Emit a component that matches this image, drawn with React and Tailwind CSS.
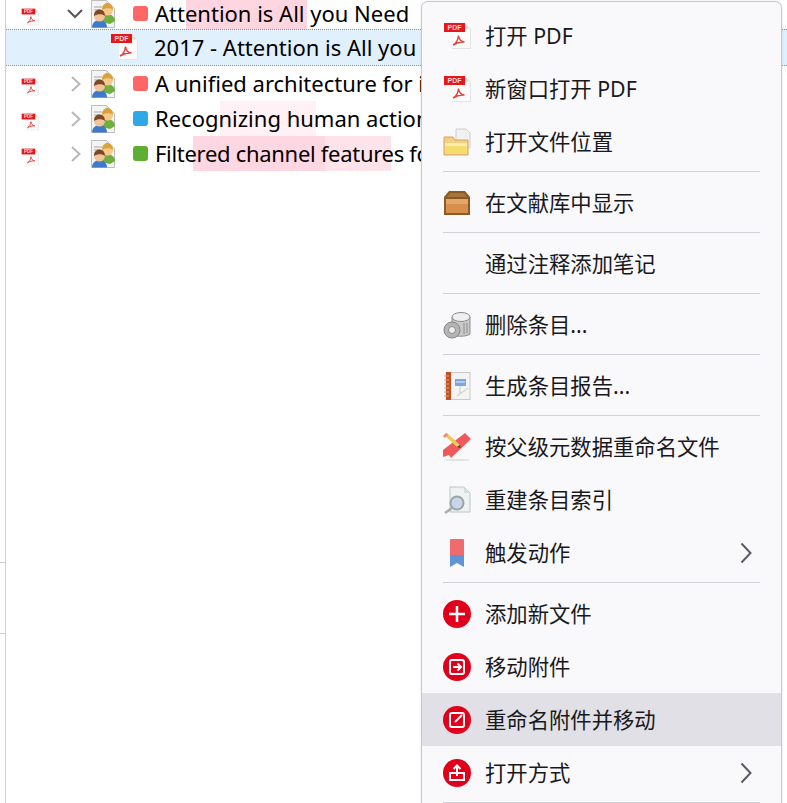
const latin = "font-['Noto_Sans','Noto_Sans_CJK_SC',sans-serif]";

function PdfIcon({ className }) {
  return (
    <svg viewBox="0 0 28 28" className={className}>
      <path d="M9 1h13l6 6v20H9z" fill="#e3e3e3" />
      <path d="M9 1h12.500L27 6.500V26H9z" fill="#fbfbfb" />
      <path d="M21.500 1v5.500H27z" fill="#dcdcdc" />
      <rect x="1" y="1" width="21" height="9" fill="#e5161c" />
      <text
        x="11.500"
        y="8.200"
        textAnchor="middle"
        fontSize="7"
        fontWeight="700"
        fontFamily="Liberation Sans, sans-serif"
        fill="#fbd5d5"
      >
        PDF
      </text>
      <path
        d="M10 23c3-1.500 5-5 5.500-9.500.3 3.500 2 6 6 6.500-3.500-.3-8 .7-11.500 3z"
        fill="none"
        stroke="#e8443f"
        strokeWidth="1.500"
      />
    </svg>
  );
}

function PeopleIcon() {
  return (
    <svg viewBox="0 0 24 28" className="w-6 h-7 shrink-0">
      <path d="M.5.500h15l8 8v19H.5z" fill="#f4f4f4" stroke="#bdbdbd" />
      <path d="M15 .500v8h8.500z" fill="#dedede" />
      <path d="M3 7h8M3 10h6M3 13h5" stroke="#a5a5a5" />
      <path d="M10 22c0-5 4-8 7-8s7 3 7 7l-5 3z" fill="#6fae3f" />
      <circle cx="16.500" cy="10" r="5.500" fill="#f4c98a" />
      <path d="M11 10c0-5 3-7 5.500-7s5.500 2 5.500 7c-2-2.500-8-2.500-11 0z" fill="#dca23a" />
      <path d="M1 27.500c0-5 4-7.500 7.500-7.500s7.500 2.500 7.500 7.500z" fill="#3f79c9" />
      <circle cx="8.500" cy="16" r="5.500" fill="#f0c39a" />
      <path d="M3 16c0-5 3-6.500 5.500-6.500S14 11 14 16c-2.500-2.500-7.500-2.500-11 0z" fill="#7b4a25" />
    </svg>
  );
}

function FolderIcon() {
  return (
    <svg viewBox="0 0 28 28" className="w-7 h-7">
      <path d="M13 1h10l4 4v15H13z" fill="#f1f1f1" stroke="#cfcfcf" />
      <path d="M1 9h9l2 3h13v15H1z" fill="#f3cf86" stroke="#d9a45a" />
      <path d="M2 15h22v11H2z" fill="#f4dc6e" />
      <path d="M2 15h22v3H2z" fill="#fbeeb0" />
    </svg>
  );
}

function BoxIcon() {
  return (
    <svg viewBox="0 0 28 28" className="w-7 h-7">
      <path d="M6 2h16l5 6v18H1V8z" fill="#8a5a24" />
      <path d="M7 4h14l3 4H4z" fill="#a8743a" />
      <rect x="3" y="10" width="22" height="14" fill="#d98f4c" />
      <path d="M3 10h22v5H3z" fill="#e4a76a" />
    </svg>
  );
}

function TrashIcon() {
  return (
    <svg viewBox="0 0 28 28" className="w-7 h-7">
      <path d="M9 6v17c3 3 14 3 18 0V6z" fill="#c9c9c9" stroke="#8c8c8c" />
      <ellipse cx="18" cy="6" rx="9" ry="4.500" fill="#efefef" stroke="#8c8c8c" />
      <path d="M21 12v11M24 12v10" stroke="#8c8c8c" />
      <circle cx="9" cy="19" r="8" fill="#b5b5b5" stroke="#848484" />
      <circle cx="9" cy="19" r="3.500" fill="#eeeeee" stroke="#8c8c8c" />
    </svg>
  );
}

function ReportIcon() {
  return (
    <svg viewBox="0 0 28 28" className="w-7 h-7">
      <rect x="3" y="0.500" width="24" height="27" fill="#f4f4f4" stroke="#c9c9c9" />
      <rect x="3" y="0" width="5" height="28" fill="#c4501f" />
      <path d="M1 4h5M1 8h5M1 12h5M1 16h5M1 20h5M1 24h5" stroke="#d7a48c" />
      <rect x="12" y="7" width="11" height="7" fill="#7da5e3" />
      <path d="M13 10h9" stroke="#e6eefb" />
      <path d="M17 14v8M14 24l11-8" stroke="#d6d6d6" strokeWidth="1.500" fill="none" />
    </svg>
  );
}

function RenameIcon() {
  return (
    <svg viewBox="0 0 28 28" className="w-7 h-7">
      <ellipse cx="14" cy="27" rx="13" ry="1" fill="#e2e2e2" />
      <path d="M22 0l6 6-20 19-2-3-6 2v-7z" fill="#f0595c" />
      <path d="M1 2l3-2 13 12-3 2z" fill="#eccb5f" />
      <path d="M14 14l3-2 .5 3z" fill="#4a3a2a" />
      <path d="M0 3l3-3 2 2-3 3z" fill="#e98a8a" />
    </svg>
  );
}

function IndexIcon() {
  return (
    <svg viewBox="0 0 28 28" className="w-7 h-7">
      <path d="M7 1h14l6 6v19H7z" fill="#eef2f0" stroke="#b9c7c2" />
      <path d="M21 1v6h6z" fill="#d5dedb" />
      <circle cx="14" cy="17" r="6.500" fill="#c7d6ec" stroke="#98a6a3" strokeWidth="2" />
      <path d="M9 22l-7 5" stroke="#a5b0ad" strokeWidth="2.500" />
    </svg>
  );
}

function BookmarkIcon() {
  return (
    <svg viewBox="0 0 14 28" className="w-3.5 h-7">
      <path d="M1 0h12a1 1 0 0 1 1 1v15H0V1a1 1 0 0 1 1-1z" fill="#f06b6e" />
      <path d="M0 16h14v12l-7-4-7 4z" fill="#5f93d3" />
    </svg>
  );
}

function RedCircle({ children }) {
  return (
    <svg viewBox="0 0 28 28" className="w-7 h-7">
      <circle cx="14" cy="14" r="14" fill="#e0001b" />
      <g fill="none" stroke="#fff" strokeWidth="2">
        {children}
      </g>
    </svg>
  );
}

// tree twisties and the submenu arrow are thinner and longer than the icon package's chevrons
function TreeArrowRight() {
  return (
    <svg viewBox="0 0 10 16" className="w-2.5 h-4 shrink-0">
      <path d="M1 1l7.500 7L1 15" fill="none" stroke="#b8b8b8" strokeWidth="2" />
    </svg>
  );
}

function TreeArrowDown() {
  return (
    <svg viewBox="0 0 16 10" className="w-4 h-2.5 shrink-0">
      <path d="M1 1l7 7 7-7" fill="none" stroke="#555" strokeWidth="2" />
    </svg>
  );
}

function MenuArrow() {
  return (
    <svg viewBox="0 0 12 22" className="w-3 h-[22px] shrink-0">
      <path d="M1.500 1.500l9 9.500-9 9.500" fill="none" stroke="#5b5b66" strokeWidth="2" />
    </svg>
  );
}

const rows = [
  {
    title: "A unified architecture for image and text understanding with multitask learning",
    color: "bg-[#ff6666]",
    marks: [],
  },
  {
    title: "Recognizing human action in time-sequential images",
    color: "bg-[#2ea8e6]",
    marks: [{ cls: "left-[65px] w-[96px] bg-[#fff1f5]" }],
  },
  {
    title: "Filtered channel features for pedestrian detection",
    color: "bg-[#5fae34]",
    tracking: "tracking-[-0.3px]",
    marks: [
      { cls: "left-[38px] w-[132px] bg-[#ffd7e2]" },
      { cls: "left-[170px] w-[66px] bg-[#ffe3ea]" },
    ],
  },
];

const menuGroups = [
  [
    { label: "打开 PDF", icon: <PdfIcon className="w-7 h-7" /> },
    { label: "新窗口打开 PDF", icon: <PdfIcon className="w-7 h-7" /> },
    { label: "打开文件位置", icon: <FolderIcon /> },
  ],
  [{ label: "在文献库中显示", icon: <BoxIcon /> }],
  [{ label: "通过注释添加笔记" }],
  [{ label: "删除条目...", icon: <TrashIcon /> }],
  [{ label: "生成条目报告...", icon: <ReportIcon /> }],
  [
    { label: "按父级元数据重命名文件", icon: <RenameIcon /> },
    { label: "重建条目索引", icon: <IndexIcon /> },
    { label: "触发动作", icon: <BookmarkIcon />, arrow: true },
  ],
  [
    {
      label: "添加新文件",
      icon: (
        <RedCircle>
          <path d="M14 6v16M6 14h16" strokeWidth="2.500" />
        </RedCircle>
      ),
    },
    {
      label: "移动附件",
      icon: (
        <RedCircle>
          <rect x="7" y="7" width="14" height="14" rx="2" />
          <path d="M10 14h8M14.500 10.500l3.500 3.500-3.500 3.500" />
        </RedCircle>
      ),
    },
    {
      label: "重命名附件并移动",
      active: true,
      icon: (
        <RedCircle>
          <rect x="7" y="7" width="14" height="14" rx="2" />
          <path d="M12 16l7-7" />
        </RedCircle>
      ),
    },
    {
      label: "打开方式",
      arrow: true,
      icon: (
        <RedCircle>
          <path d="M7 13v8h14v-8M14 17V7M10.500 10l3.500-3.500 3.500 3.500M7 14h14" />
        </RedCircle>
      ),
    },
  ],
];

function MenuItem({ item }) {
  return (
    <div
      className={`flex items-center h-[53px] pl-[21px] pr-[29px] ${
        item.active ? "bg-[#e0e0e6]" : ""
      }`}
    >
      <div className="w-7 h-7 flex justify-center items-center shrink-0">{item.icon}</div>
      <span className="ml-[14px] pt-px text-[21.33px] leading-none text-[#18181b] flex-1">
        {item.label}
      </span>
      {item.arrow && <MenuArrow />}
    </div>
  );
}

function App() {
  return (
    <div className={`relative flex w-[787px] h-[803px] overflow-hidden bg-white ${latin}`}>
      <aside className="w-1.5 h-full shrink-0 border-r border-[#cfcfcf]">
        <div className="mt-[562px] h-px bg-[#cfcfcf]" />
        <div className="mt-[70px] h-px bg-[#cfcfcf]" />
      </aside>

      <div className="flex-1 min-w-0 text-[22px] text-black whitespace-nowrap">
        <div className="flex items-center h-[29px]">
          <PdfIcon className="ml-[15px] mt-[5px] w-[18px] h-[18px] shrink-0" />
          <div className="ml-[28px] -mt-[2px]">
            <TreeArrowDown />
          </div>
          <div className="ml-2 -mt-px">
            <PeopleIcon />
          </div>
          <span className="ml-[18px] -mt-[3px] w-[15px] h-[15px] rounded-[3px] bg-[#ff6666] shrink-0" />
          <div className="relative ml-[7px] h-full flex items-center pb-[3px]">
            <span className="absolute left-[31px] w-[121px] top-0 h-[29px] bg-[#ffd6e0]" />
            <span className="relative">Attention is All you Need</span>
          </div>
        </div>

        <div className="flex items-center h-[37px] bg-[#e1f0fd] border-y border-dotted border-[#5a9fe0]">
          <PdfIcon className="ml-[104px] -mt-px w-7 h-7 shrink-0" />
          <span className="ml-4">2017 - Attention is All you Need.pdf</span>
        </div>

        {rows.map((row) => (
          <div key={row.title} className="flex items-center h-[35px]">
            <PdfIcon className="ml-[15px] mt-[6px] w-[18px] h-[18px] shrink-0" />
            <div className="ml-8">
              <TreeArrowRight />
            </div>
            <div className="ml-2.5">
              <PeopleIcon />
            </div>
            <span className={`ml-[18px] w-[15px] h-[15px] rounded-[3px] shrink-0 ${row.color}`} />
            <div className="relative ml-[7px] w-[629px] h-full flex items-center overflow-hidden">
              {row.marks.map((m) => (
                <span key={m.cls} className={`absolute top-0 h-full ${m.cls}`} />
              ))}
              <span className={`relative ${row.tracking || ""}`}>{row.title}</span>
            </div>
          </div>
        ))}
      </div>

      <div className="absolute left-[421px] top-px w-[361px] bg-[#f9f9fb] border border-[#c9c9c9] rounded-t-[7px] pt-[7px] shadow-[0_0_2px_rgba(0,0,0,0.15)]">
        {menuGroups.map((group, i) => (
          <div key={i}>
            {group.map((item) => (
              <MenuItem key={item.label} item={item} />
            ))}
            <div className="mx-[21px] mt-[3px] mb-1 h-px bg-[#d0d0d8]" />
          </div>
        ))}
      </div>
    </div>
  );
}

export default App;
